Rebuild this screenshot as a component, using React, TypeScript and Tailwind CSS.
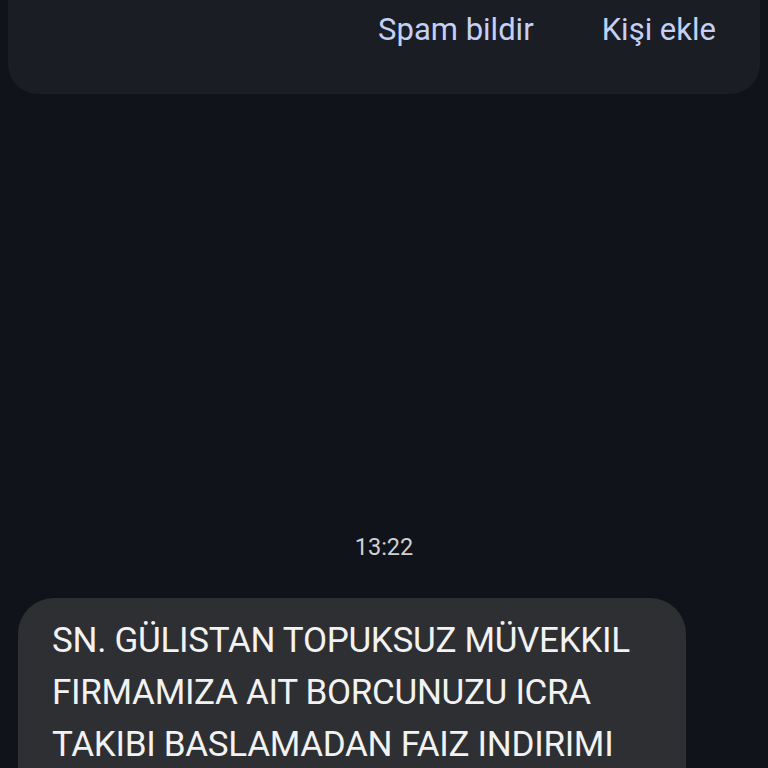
export default function App() {
  return (
    <div className="w-[768px] h-[768px] overflow-hidden bg-[#11131a] flex flex-col" style={{ fontFamily: 'Roboto, "Noto Sans", sans-serif' }}>
      {/* Top action card */}
      <div className="shrink-0 mx-2 h-[94px] rounded-b-[30px] bg-[#1b1d24] flex items-start justify-end gap-[68px] pr-[44px] pt-[10px]">
        <span className="text-[31px] leading-[40px] text-[#c3d1f6]">Spam bildir</span>
        <span className="text-[31px] leading-[40px] text-[#c3d1f6]">Kişi ekle</span>
      </div>

      {/* Timestamp */}
      <div className="shrink-0 mt-[438px] text-center text-[23.5px] leading-[30px] text-[#cfd0d4]">13:22</div>

      {/* Message bubble */}
      <div className="shrink-0 mt-[36px] ml-[18px] w-[668px] h-[200px] rounded-t-[36px] bg-[#2e2f33] pl-[34px] pt-[17px]">
        <p className="text-[35px] leading-[52px] text-[#f2f2f2] tracking-[-0.3px] whitespace-nowrap">
          SN. GÜLISTAN TOPUKSUZ MÜVEKKIL
          <br />
          FIRMAMIZA AIT BORCUNUZU ICRA
          <br />
          TAKIBI BASLAMADAN FAIZ INDIRIMI
        </p>
      </div>
    </div>
  );
}
